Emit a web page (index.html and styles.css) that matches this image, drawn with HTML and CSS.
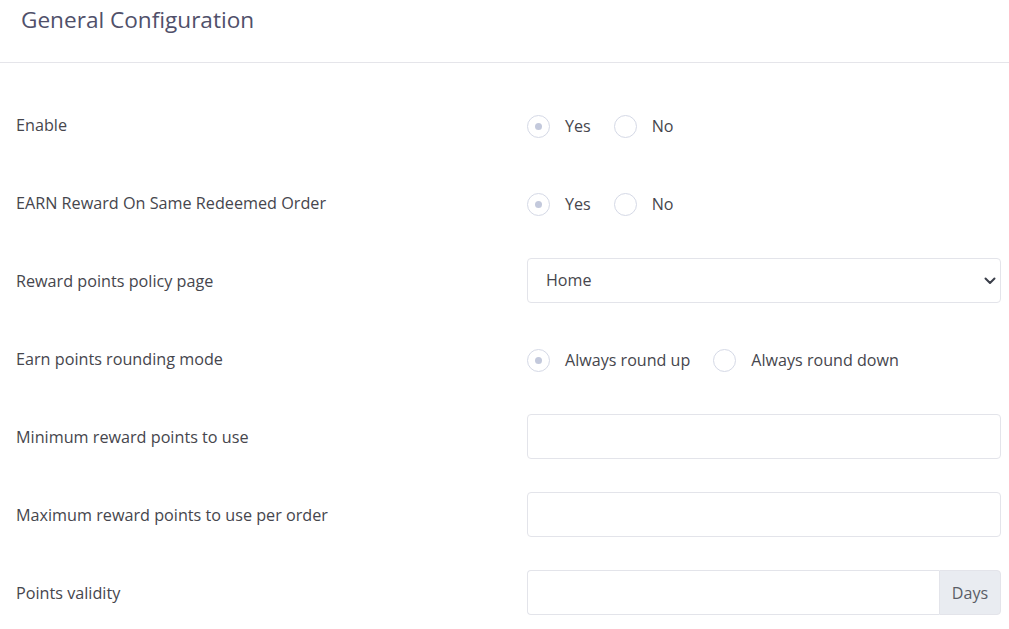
FILE: index.html
```html
<!DOCTYPE html>
<html>
<head>
<meta charset="utf-8">
<link rel="stylesheet" href="styles.css">
</head>
<body>
<div class="card">
  <div class="card-header"><h3 class="card-title">General Configuration</h3></div>
  <div class="card-body">
    <div class="form-row">
      <label class="form-label">Enable</label>
      <div class="radio-group">
        <span class="radio"><span class="radio-circle checked"></span><span class="radio-text">Yes</span></span>
        <span class="radio"><span class="radio-circle"></span><span class="radio-text">No</span></span>
      </div>
    </div>
    <div class="form-row">
      <label class="form-label">EARN Reward On Same Redeemed Order</label>
      <div class="radio-group">
        <span class="radio"><span class="radio-circle checked"></span><span class="radio-text">Yes</span></span>
        <span class="radio"><span class="radio-circle"></span><span class="radio-text">No</span></span>
      </div>
    </div>
    <div class="form-row">
      <label class="form-label">Reward points policy page</label>
      <div class="select">
        <span>Home</span>
        <svg class="chevron" width="12" height="8" viewBox="0 0 12 8"><path d="M1.5 1.5 L6 6 L10.5 1.5" fill="none" stroke="#3b3f4a" stroke-width="2" stroke-linecap="round" stroke-linejoin="round"/></svg>
      </div>
    </div>
    <div class="form-row">
      <label class="form-label">Earn points rounding mode</label>
      <div class="radio-group">
        <span class="radio"><span class="radio-circle checked"></span><span class="radio-text">Always round up</span></span>
        <span class="radio"><span class="radio-circle"></span><span class="radio-text">Always round down</span></span>
      </div>
    </div>
    <div class="form-row">
      <label class="form-label">Minimum reward points to use</label>
      <div class="input"></div>
    </div>
    <div class="form-row">
      <label class="form-label">Maximum reward points to use per order</label>
      <div class="input"></div>
    </div>
    <div class="form-row">
      <label class="form-label">Points validity</label>
      <div class="input-group">
        <div class="input grow"></div>
        <div class="addon">Days</div>
      </div>
    </div>
  </div>
</div>
</body>
</html>
```
FILE: styles.css
```css
* { box-sizing: border-box; }
html, body { margin: 0; padding: 0; background: #fff; }
body {
  font-family: "Open Sans", "Liberation Sans", sans-serif;
  color: #46464d;
  width: 1009px;
  height: 629px;
  overflow: hidden;
}
.card-header {
  height: 63px;
  border-bottom: 1px solid #e5e5ea;
  padding: 3px 21px 0;
}
.card-title {
  margin: 0;
  font-size: 22.6px;
  font-weight: 400;
  line-height: 34px;
  color: #50506a;
}
.card-body {
  padding: 39px 8px 0 16px;
  display: flex;
  flex-direction: column;
  gap: 33px;
}
.form-row {
  display: grid;
  grid-template-columns: 511px 1fr;
  align-items: center;
  height: 45px;
}
.form-label {
  font-size: 16.2px;
  color: #46464d;
}
.radio-group {
  display: flex;
  align-items: center;
  gap: 23px;
  margin-top: 3px;
}
.radio {
  display: flex;
  align-items: center;
  gap: 15px;
}
.radio-circle {
  width: 23px;
  height: 23px;
  border: 1px solid #d5d9e6;
  border-radius: 50%;
  display: flex;
  align-items: center;
  justify-content: center;
  background: #fff;
}
.radio-circle.checked::after {
  content: "";
  width: 7px;
  height: 7px;
  border-radius: 50%;
  background: #c3c9dc;
}
.radio-text {
  font-size: 16.1px;
  color: #46464d;
}
.select, .input {
  height: 45px;
  border: 1px solid #e3e4ea;
  border-radius: 4px;
  background: #fff;
}
.select {
  display: flex;
  align-items: center;
  justify-content: space-between;
  padding: 0 4px 0 18px;
  font-size: 16.1px;
  color: #46464d;
}
.select span { margin-top: -1px; }
.input-group {
  display: flex;
  height: 45px;
}
.input.grow {
  flex: 1;
  border-radius: 4px 0 0 4px;
  border-right: none;
}
.addon {
  width: 62px;
  background: #e9ecf1;
  border: 1px solid #e3e4ea;
  border-radius: 0 4px 4px 0;
  display: flex;
  align-items: center;
  justify-content: center;
  font-size: 16.1px;
  color: #5a5d66;
}
```
